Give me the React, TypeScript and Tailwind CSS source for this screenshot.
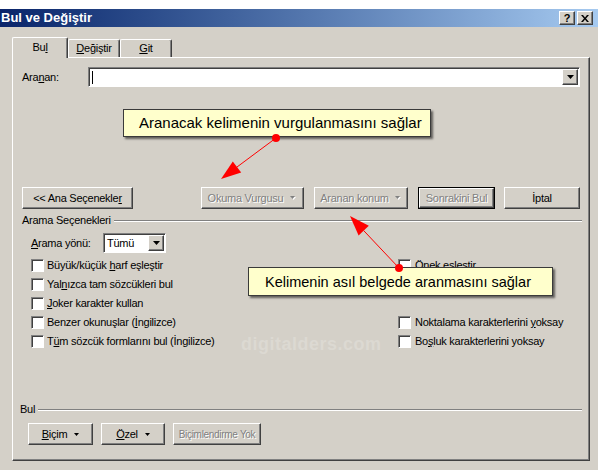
import React from "react";

function Raised({ className = "", children }: { className?: string; children?: React.ReactNode }) {
  return (
    <div
      className={
        "flex items-center justify-center bg-[#D4D0C8] border border-t-white border-l-white border-r-[#404040] border-b-[#404040] shadow-[inset_-1px_-1px_0_#808080] " +
        className
      }
    >
      {children}
    </div>
  );
}

function Tri({ w = 7, h = 4, color = "#000" }: { w?: number; h?: number; color?: string }) {
  return (
    <svg width={w} height={h} viewBox={`0 0 ${w} ${h}`}>
      <polygon points={`0,0 ${w},0 ${w / 2},${h}`} fill={color} />
    </svg>
  );
}

function DisabledTri() {
  return (
    <span className="relative inline-block w-[7px] h-[5px]">
      <span className="absolute left-[1px] top-[1px]">
        <Tri w={5} h={3} color="#ffffff" />
      </span>
      <span className="absolute left-0 top-0">
        <Tri w={5} h={3} color="#808080" />
      </span>
    </span>
  );
}

function Check() {
  return (
    <span className="block w-[13px] h-[13px] shrink-0 bg-white border border-t-[#808080] border-l-[#808080] border-r-white border-b-white shadow-[inset_1px_1px_0_#404040]" />
  );
}

function CheckRow({ children }: { children?: React.ReactNode }) {
  return (
    <div className="h-[19px] flex items-center gap-[3px]">
      <Check />
      <span className="whitespace-nowrap">{children}</span>
    </div>
  );
}

function Separator({ label, pl }: { label: string; pl: string }) {
  return (
    <div className={"h-[13px] flex items-center pr-[7px] " + pl}>
      <span className="whitespace-nowrap">{label}</span>
      <div className="ml-[3px] flex-1 h-[2px] border-t border-t-[#808080] border-b border-b-white" />
    </div>
  );
}

const dis = "text-[#808080] [text-shadow:1px_1px_0_#ffffff]";

export default function App() {
  return (
    <div className="relative w-[604px] h-[476px] bg-white overflow-hidden text-[11px] leading-[13px] tracking-[-0.25px] text-black [font-family:'Liberation_Sans',Arial,sans-serif]">
      <div className="mt-[9px] w-[598px] h-[461px] bg-[#D4D0C8] flex flex-col">
        {/* Title bar */}
        <div className="h-[18px] flex items-center justify-between pl-[1px] pr-[5px] bg-gradient-to-r from-[#0A246A] to-[#A6CAF0]">
          <span className="text-white font-bold text-[13px] leading-[16px] tracking-normal">Bul ve Değiştir</span>
          <div className="flex gap-[2px]">
            <Raised className="w-[16px] h-[14px] font-bold text-[11px] leading-[11px] pt-[1px]">?</Raised>
            <Raised className="w-[16px] h-[14px]">
              <svg width="8" height="7" viewBox="0 0 8 7">
                <path d="M0 0 L2 0 L4 2.5 L6 0 L8 0 L5 3.5 L8 7 L6 7 L4 4.5 L2 7 L0 7 L3 3.5 Z" fill="#000" />
              </svg>
            </Raised>
          </div>
        </div>

        {/* Tabs */}
        <div className="h-[30px] pl-[12px] flex items-end">
          <div className="relative z-10 -mb-px w-[56px] h-[21px] bg-[#D4D0C8] border-t border-l border-t-white border-l-white border-r border-r-[#404040] shadow-[inset_-1px_0_0_#808080] rounded-t-[2px] flex items-start justify-center pt-[3px]">
            <span>
              Bu<span className="underline">l</span>
            </span>
          </div>
          <div className="w-[52px] h-[18px] border-t border-l border-t-white border-l-white border-r border-r-[#404040] shadow-[inset_-1px_0_0_#808080] rounded-t-[2px] flex items-start justify-center pt-[2px]">
            <span>
              <span className="underline">D</span>eğiştir
            </span>
          </div>
          <div className="w-[52px] h-[18px] border-t border-l border-t-white border-l-white border-r border-r-[#404040] shadow-[inset_-1px_0_0_#808080] rounded-t-[2px] flex items-start justify-center pt-[2px]">
            <span>
              <span className="underline">G</span>it
            </span>
          </div>
        </div>

        {/* Panel */}
        <div className="ml-[12px] w-[578px] h-[404px] border border-t-white border-l-white border-r-[#404040] border-b-[#404040] shadow-[inset_-1px_-1px_0_#808080] flex flex-col">
          {/* Aranan */}
          <div className="mt-[9px] h-[20px] flex items-center pl-[9px]">
            <span className="w-[66px]">
              Ara<span className="underline">n</span>an:
            </span>
            <div className="w-[492px] h-[20px] bg-white border border-t-[#808080] border-l-[#808080] border-r-white border-b-white shadow-[inset_1px_1px_0_#404040] flex items-center justify-between p-[1px] pl-[2px]">
              <div className="w-[1px] h-[13px] bg-black ml-[1px]" />
              <Raised className="w-[16px] h-[16px]">
                <Tri />
              </Raised>
            </div>
          </div>

          {/* Buttons row */}
          <div className="mt-[100px] h-[22px] flex pl-[9px]">
            <Raised className="w-[111px] h-[22px]">
              <span>
                &lt;&lt; Ana Seçenekle<span className="underline">r</span>
              </span>
            </Raised>
            <Raised className="ml-[68px] w-[103px] h-[22px] gap-[7px]">
              <span className={dis}>Okuma Vurgusu</span>
              <DisabledTri />
            </Raised>
            <Raised className="ml-[10px] w-[94px] h-[22px] gap-[6px]">
              <span className={dis}>Aranan konum</span>
              <DisabledTri />
            </Raised>
            <div className="ml-[10px] w-[77px] h-[22px] border border-black">
              <Raised className="w-full h-full">
                <span className={dis}>Sonrakini Bul</span>
              </Raised>
            </div>
            <Raised className="ml-[9px] w-[76px] h-[22px]">
              <span>İptal</span>
            </Raised>
          </div>

          {/* Arama Seçenekleri */}
          <div className="mt-[5px]">
            <Separator label="Arama Seçenekleri" pl="pl-[9px]" />
          </div>

          {/* Arama yönü */}
          <div className="mt-[6px] h-[20px] flex items-center pl-[18px]">
            <span className="w-[72px]">
              <span className="underline">A</span>rama yönü:
            </span>
            <div className="w-[63px] h-[20px] bg-white border border-t-[#808080] border-l-[#808080] border-r-white border-b-white shadow-[inset_1px_1px_0_#404040] flex items-center justify-between p-[1px] pl-[3px]">
              <span>Tümü</span>
              <Raised className="w-[16px] h-[16px]">
                <Tri />
              </Raised>
            </div>
          </div>

          {/* Options grid */}
          <div className="mt-[3px] grid grid-cols-[367px_1fr] pl-[18px]">
            <CheckRow>
              Büyük/küçük <span className="underline">h</span>arf eşleştir
            </CheckRow>
            <div className="h-[19px] flex items-center gap-[4px]">
              <Check />
              <span>Önek eşleştir</span>
            </div>
            <CheckRow>
              Yal<span className="underline">n</span>ızca tam sözcükleri bul
            </CheckRow>
            <div />
            <CheckRow>
              <span className="underline">J</span>oker karakter kullan
            </CheckRow>
            <div />
            <CheckRow>
              Benzer okunuşlar (<span className="underline">İ</span>ngilizce)
            </CheckRow>
            <div className="h-[19px] flex items-center gap-[4px]">
              <Check />
              <span>
                Noktalama karakterlerini <span className="underline">y</span>oksay
              </span>
            </div>
            <CheckRow>
              T<span className="underline">ü</span>m sözcük formlarını bul (İngilizce)
            </CheckRow>
            <div className="h-[19px] flex items-center gap-[4px]">
              <Check />
              <span>
                Bo<span className="underline">ş</span>luk karakterlerini yoksay
              </span>
            </div>
          </div>

          {/* Bul */}
          <div className="mt-[52px]">
            <Separator label="Bul" pl="pl-[7px]" />
          </div>

          <div className="mt-[7px] h-[22px] flex pl-[15px]">
            <Raised className="w-[65px] h-[22px] gap-[7px]">
              <span>
                <span className="underline">B</span>içim
              </span>
              <Tri w={5} h={3} />
            </Raised>
            <Raised className="ml-[8px] w-[64px] h-[22px] gap-[7px]">
              <span>
                <span className="underline">Ö</span>zel
              </span>
              <Tri w={5} h={3} />
            </Raised>
            <Raised className="ml-[8px] w-[88px] h-[22px]">
              <span className={dis + " text-[10px] tracking-[-0.3px]"}>Biçimlendirme Yok</span>
            </Raised>
          </div>
        </div>
      </div>

      {/* Watermark */}
      <div className="absolute left-[241px] top-[334px] text-[18px] leading-[20px] font-bold tracking-[0.5px] text-[#dcd9d2]">
        digitalders.com
      </div>

      {/* Callout 1 */}
      <div className="absolute left-[123px] top-[109px] w-[308px] h-[28px] bg-[#FFFFCC] border border-[#3a3a3a] shadow-[2px_2px_2px_rgba(0,0,0,0.55)] flex items-center pl-[15px] text-[15px] leading-[18px] tracking-normal">
        Aranacak kelimenin vurgulanmasını sağlar
      </div>

      {/* Callout 2 */}
      <div className="absolute left-[248px] top-[267px] w-[305px] h-[29px] bg-[#FFFFCC] border border-[#3a3a3a] shadow-[2px_2px_2px_rgba(0,0,0,0.55)] flex items-center pl-[16px] text-[14.5px] leading-[18px] tracking-normal">
        Kelimenin asıl belgede aranmasını sağlar
      </div>

      {/* Arrows */}
      <svg className="absolute left-0 top-0 pointer-events-none" width="604" height="476" viewBox="0 0 604 476">
        <line x1="276" y1="138" x2="237" y2="167" stroke="#ff0000" strokeWidth="1" />
        <polygon points="221,179 241.2,172.6 232.8,161.4" fill="#ff0000" />
        <circle cx="276" cy="138" r="4" fill="#ff0000" />
        <line x1="399" y1="268" x2="363.7" y2="230.6" stroke="#ff0000" strokeWidth="1" />
        <polygon points="350,216 368.8,225.8 358.6,235.4" fill="#ff0000" />
        <circle cx="399" cy="268" r="4" fill="#ff0000" />
      </svg>
    </div>
  );
}
